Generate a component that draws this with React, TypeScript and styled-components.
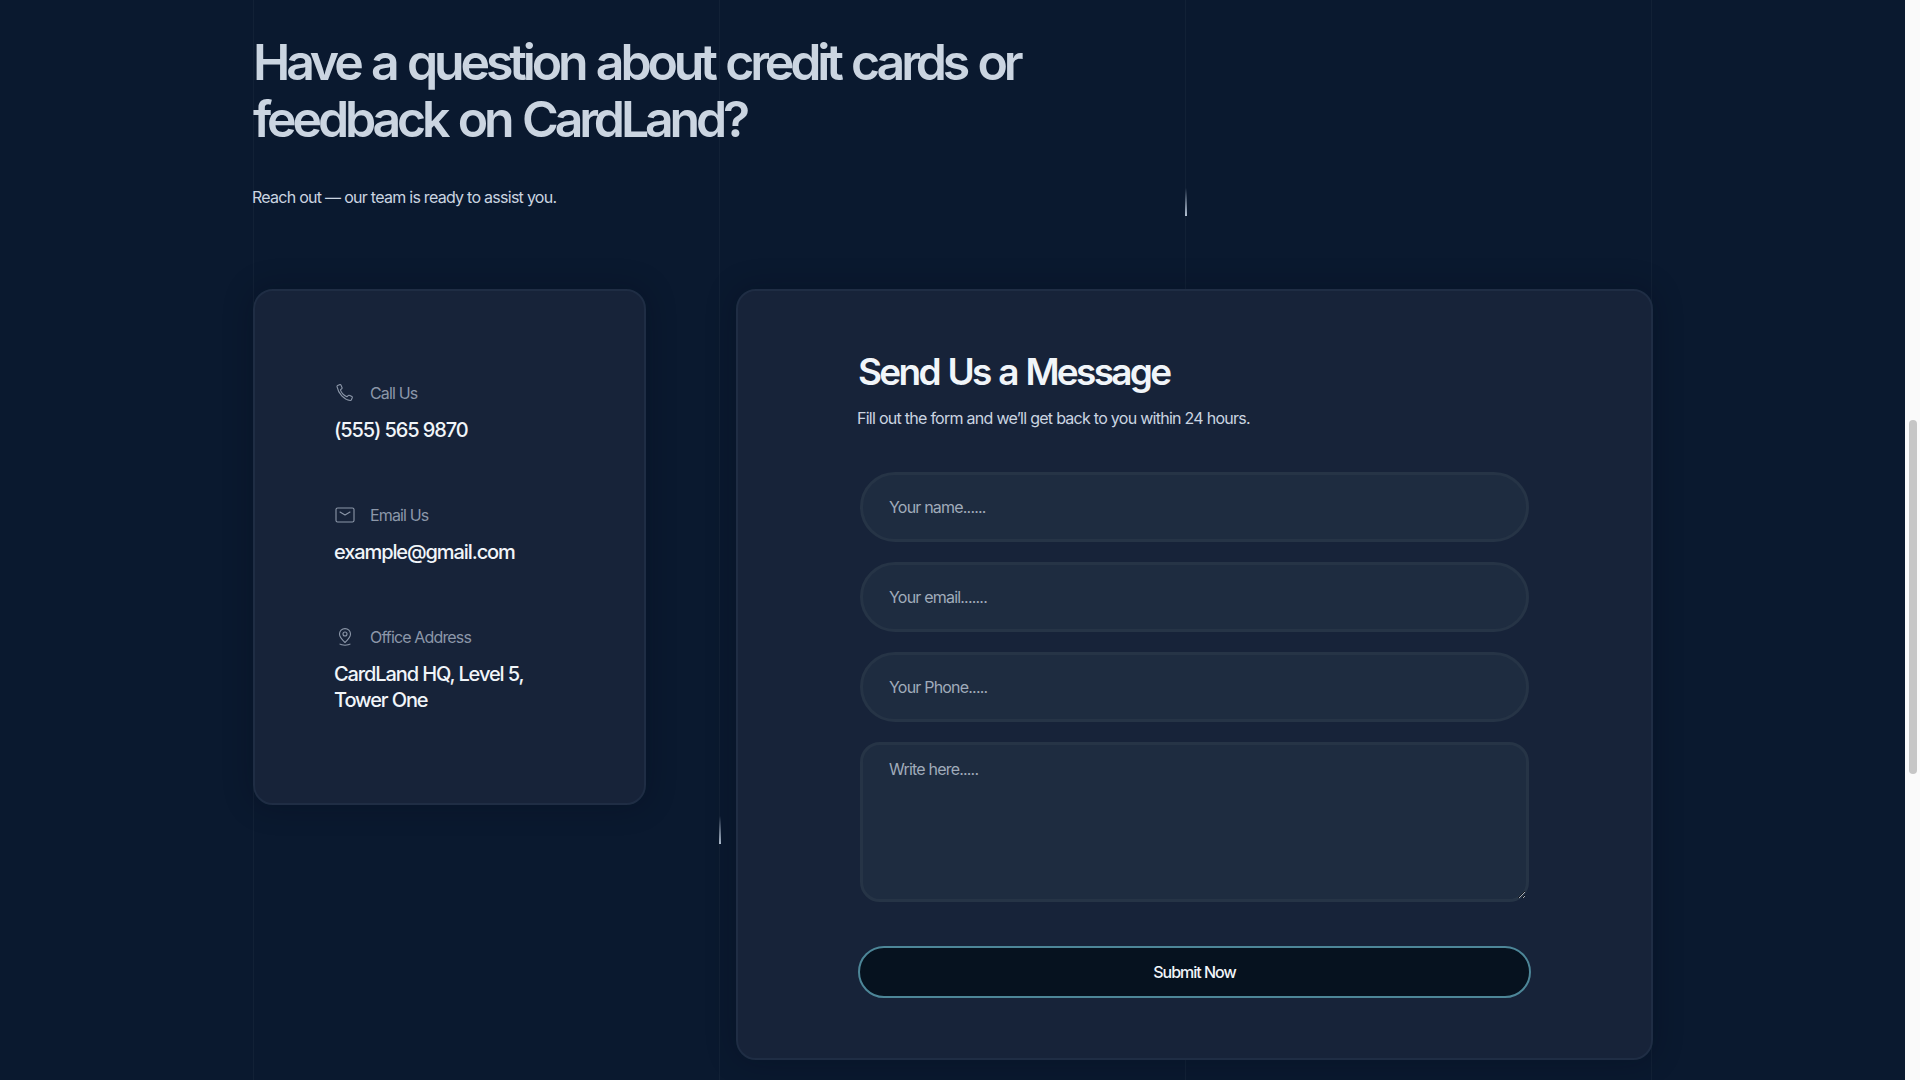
import React from "react";
import styled, { createGlobalStyle } from "styled-components";

const Global = createGlobalStyle`
  html, body { margin: 0; padding: 0; height: 100%; overflow: hidden; background: #0a192f; }
  * { box-sizing: border-box; }
`;

const Viewport = styled.div`
  display: flex;
  width: 1920px;
  height: 1080px;
  overflow: hidden;
  font-family: Inter, "Liberation Sans", sans-serif;
`;

const Page = styled.main`
  position: relative;
  flex: 1;
  height: 1080px;
  overflow: hidden;
  background: #0a192f;
  padding: 0 252px 0 253px;
`;

const GridLine = styled.span<{ $left: number }>`
  position: absolute;
  top: 0;
  bottom: 0;
  left: ${(p) => p.$left}px;
  width: 1px;
  background: rgba(255, 255, 255, 0.035);
`;

const Spark = styled.span<{ $left: number; $top: number }>`
  position: absolute;
  left: ${(p) => p.$left}px;
  top: ${(p) => p.$top}px;
  width: 2px;
  height: 28px;
  background: linear-gradient(to bottom, rgba(148, 163, 184, 0), #b4c2d4);
`;

const Content = styled.div`
  position: relative;
  padding-top: 34px;
`;

const Heading = styled.h1`
  margin: 0;
  width: 820px;
  font-size: 50px;
  line-height: 57px;
  font-weight: 600;
  letter-spacing: -4.15px;
  word-spacing: 3px;
  color: #cbd5e1;
`;

const Lead = styled.p`
  margin: 37px 0 0 -1px;
  font-size: 16px;
  line-height: 24px;
  letter-spacing: -0.73px;
  color: #cbd5e1;
`;

const Columns = styled.div`
  display: flex;
  align-items: flex-start;
  justify-content: space-between;
  margin-top: 80px;
`;

const InfoCard = styled.aside`
  width: 393px;
  height: 516px;
  padding: 90px 60px 0 80px;
  background: #172339;
  border: 2px solid #1f2d44;
  border-radius: 20px;
  box-shadow: 0 0 30px rgba(3, 10, 22, 0.3);
  display: flex;
  flex-direction: column;
  gap: 60px;
`;

const InfoItem = styled.div`
  display: flex;
  flex-direction: column;
  gap: 12px;
`;

const InfoLabel = styled.div`
  display: flex;
  align-items: center;
  gap: 15px;
  height: 24px;
  font-size: 16px;
  letter-spacing: -0.85px;
  color: #8c97a9;
`;

const IconBox = styled.span`
  display: inline-flex;
  width: 20px;
  height: 20px;
  color: #8c97a9;
`;

const InfoValue = styled.div`
  margin-left: -1px;
  font-size: 20px;
  line-height: 26px;
  font-weight: 500;
  letter-spacing: -1.1px;
  color: #f1f5f9;
`;

const FormCard = styled.section`
  width: 917px;
  height: 771px;
  padding: 58px 120px 0 120px;
  background: #172339;
  border: 2px solid #1f2d44;
  border-radius: 20px;
  box-shadow: 0 0 30px rgba(3, 10, 22, 0.3);
`;

const FormTitle = styled.h2`
  margin: 0;
  font-size: 37px;
  line-height: 46px;
  font-weight: 600;
  letter-spacing: -2.7px;
  word-spacing: 2px;
  color: #f1f5f9;
`;

const FormLead = styled.p`
  margin: 11px 0 0 -1px;
  font-size: 16px;
  line-height: 24px;
  letter-spacing: -0.73px;
  color: #cbd5e1;
`;

const Form = styled.form`
  display: flex;
  flex-direction: column;
  margin-top: 42px;
`;

const fieldStyles = `
  display: block;
  width: 669px;
  margin-left: 2px;
  background: #1e2c40;
  border: 3px solid #263446;
  color: #f1f5f9;
  font-family: Inter, "Liberation Sans", sans-serif;
  font-size: 16px;
  letter-spacing: -0.8px;
  outline: none;
  &::placeholder { color: #a0abba; opacity: 1; }
`;

const Field = styled.input`
  ${fieldStyles}
  height: 70px;
  margin-bottom: 20px;
  padding: 0 26px;
  border-radius: 35px;
`;

const TextArea = styled.textarea`
  ${fieldStyles}
  height: 160px;
  padding: 14px 26px;
  border-radius: 20px;
  resize: both;
`;

const Submit = styled.button`
  width: 673px;
  height: 52px;
  margin-top: 44px;
  background: #06121f;
  border: 2px solid #4d8698;
  border-radius: 26px;
  font-family: Inter, "Liberation Sans", sans-serif;
  font-size: 16px;
  font-weight: 500;
  letter-spacing: -1px;
  color: #f1f5f9;
`;

const ScrollTrack = styled.div`
  width: 15px;
  height: 1080px;
  padding: 420px 3px 0 4px;
  background: #fafafa;
`;

const ScrollThumb = styled.div`
  height: 354px;
  border-radius: 4px;
  background: #c6c6c6;
`;

const PhoneIcon = () => (
  <svg width="20" height="20" viewBox="0 0 20 20" fill="none" stroke="currentColor" strokeWidth="1.1" strokeLinejoin="round">
    <path d="M2.6 2.6 5 1.6c.4-.1.7 0 .9.4l1.2 2.7c.1.3 0 .6-.2.8L5.4 6.8c.9 2.7 3.5 5.5 6.5 7l1.5-1.4c.3-.2.6-.3.9-.1l2.6 1.3c.4.2.5.6.4.9l-.9 2.3c-.2.5-.7.8-1.2.7C9 16.600 3.300 10.600 2 3.700c-.1-.5.1-.9.600-1.100Z" />
  </svg>
);

const MailIcon = () => (
  <svg width="20" height="20" viewBox="0 0 20 20" fill="none" stroke="currentColor" strokeWidth="1.1" strokeLinecap="round" strokeLinejoin="round">
    <rect x="1" y="3" width="18" height="14" rx="1.6" />
    <path d="M5 7l5 3 5-3" />
  </svg>
);

const PinIcon = () => (
  <svg width="20" height="20" viewBox="0 0 20 20" fill="none" stroke="currentColor" strokeWidth="1.1" strokeLinecap="round" strokeLinejoin="round">
    <path d="M10 15.500C7 12.800 4.500 10.300 4.500 7.100a5.500 5.500 0 0 1 11 0c0 3.200-2.500 5.700-5.500 8.400Z" />
    <circle cx="10" cy="7" r="2" />
    <path d="M5 17.200c1.400 1.300 8.600 1.300 10 0" />
  </svg>
);

export default function App() {
  return (
    <Viewport>
      <Global />
      <Page>
        <GridLine $left={253} />
        <GridLine $left={719} />
        <GridLine $left={1185} />
        <GridLine $left={1651} />
        <Spark $left={1185} $top={188} />
        <Spark $left={719} $top={816} />
        <Content>
          <Heading>Have a question about credit cards or feedback on CardLand?</Heading>
          <Lead>Reach out — our team is ready to assist you.</Lead>
          <Columns>
            <InfoCard>
              <InfoItem>
                <InfoLabel>
                  <IconBox><PhoneIcon /></IconBox>
                  Call Us
                </InfoLabel>
                <InfoValue>(555) 565 9870</InfoValue>
              </InfoItem>
              <InfoItem>
                <InfoLabel>
                  <IconBox><MailIcon /></IconBox>
                  Email Us
                </InfoLabel>
                <InfoValue>example@gmail.com</InfoValue>
              </InfoItem>
              <InfoItem>
                <InfoLabel>
                  <IconBox><PinIcon /></IconBox>
                  Office Address
                </InfoLabel>
                <InfoValue>CardLand HQ, Level 5,<br />Tower One</InfoValue>
              </InfoItem>
            </InfoCard>
            <FormCard>
              <FormTitle>Send Us a Message</FormTitle>
              <FormLead>Fill out the form and we’ll get back to you within 24 hours.</FormLead>
              <Form onSubmit={(e) => e.preventDefault()}>
                <Field placeholder="Your name......" />
                <Field placeholder="Your email......." />
                <Field placeholder="Your Phone....." />
                <TextArea placeholder="Write here....." />
                <Submit type="submit">Submit Now</Submit>
              </Form>
            </FormCard>
          </Columns>
        </Content>
      </Page>
      <ScrollTrack>
        <ScrollThumb />
      </ScrollTrack>
    </Viewport>
  );
}
